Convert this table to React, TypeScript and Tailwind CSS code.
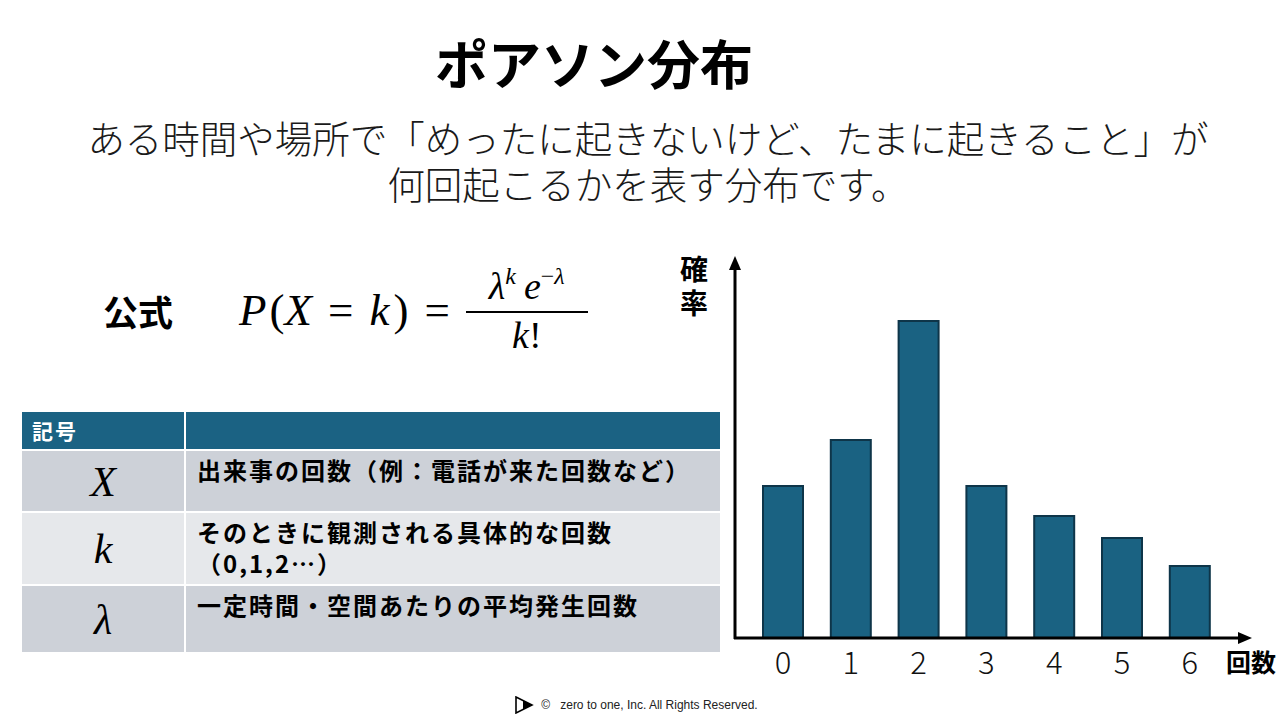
import React from 'react'

const jp = { fontFamily: '"Noto Sans CJK JP", "Noto Sans", sans-serif' }
const math = { fontFamily: '"Liberation Serif", "DejaVu Serif", serif' }

const bars = [
  { label: '0', top: 246 },
  { label: '1', top: 200 },
  { label: '2', top: 81 },
  { label: '3', top: 246 },
  { label: '4', top: 276 },
  { label: '5', top: 298 },
  { label: '6', top: 326 },
]

const rows = [
  { sym: 'X', text: ['出来事の回数（例：電話が来た回数など）'], h: 'h-[60px]', bg: 'bg-[#cdd1d8]' },
  { sym: 'k', text: ['そのときに観測される具体的な回数', '（0,1,2…）'], h: 'h-[71px]', bg: 'bg-[#e6e8eb]' },
  { sym: 'λ', text: ['一定時間・空間あたりの平均発生回数'], h: 'h-[66px]', bg: 'bg-[#cdd1d8]' },
]

function Formula() {
  return (
    <div className="flex items-center text-[45px] text-black" style={math}>
      <span className="italic">P</span>
      <span className="ml-[3px]">(</span>
      <span className="italic">X</span>
      <span className="mx-[16px]">=</span>
      <span className="italic">k</span>
      <span className="ml-[4px]">)</span>
      <span className="mx-[16px]">=</span>
      <div className="flex flex-col items-center">
        <div className="flex items-start text-[38px] leading-[42px] italic">
          <span>λ</span>
          <span className="text-[24px] leading-[22px] mr-[8px]">k</span>
          <span>e</span>
          <span className="text-[24px] leading-[22px] not-italic">−</span>
          <span className="text-[24px] leading-[22px]">λ</span>
        </div>
        <div className="h-[2px] w-[122px] bg-black mt-[4px]" />
        <div className="text-[38px] leading-[44px] italic">
          k<span className="not-italic">!</span>
        </div>
      </div>
    </div>
  )
}

function Chart() {
  return (
    <svg width="610" height="450" viewBox="0 0 610 450" className="block">
      <text x="24" y="40" fontSize="28" fontWeight="700" textAnchor="middle" style={jp}>確</text>
      <text x="24" y="74" fontSize="28" fontWeight="700" textAnchor="middle" style={jp}>率</text>
      {bars.map((b, i) => {
        const x = 93 + i * 67.8
        return (
          <g key={b.label}>
            <rect x={x} y={b.top} width="40" height={398 - b.top} fill="#1a6282" stroke="#0e3549" strokeWidth="2" />
            <text x={x + 20} y="434" fontSize="31" fontWeight="300" textAnchor="middle" fill="#111" style={jp}>
              {b.label}
            </text>
          </g>
        )
      })}
      <line x1="65" y1="28" x2="65" y2="399" stroke="#000" strokeWidth="3" />
      <polygon points="65,16 59,30 71,30" fill="#000" />
      <line x1="64" y1="398" x2="570" y2="398" stroke="#000" strokeWidth="3" />
      <polygon points="582,398 568,392 568,404" fill="#000" />
      <text x="581" y="432" fontSize="25" fontWeight="700" textAnchor="middle" style={jp}>回数</text>
    </svg>
  )
}

export default function App() {
  return (
    <div className="w-[1280px] h-[720px] bg-white flex flex-col overflow-hidden text-black" style={jp}>
      <h1 className="pt-[31px] pr-[92px] text-center text-[53px] leading-[62px] font-bold">ポアソン分布</h1>
      <div className="mt-[21px] pl-[16px] text-center text-[37.5px] leading-[46px] font-light text-[#1a1a1a]">
        <p>ある時間や場所で「めったに起きないけど、たまに起きること」が</p>
        <p>何回起こるかを表す分布です。</p>
      </div>

      <div className="flex">
        {/* left: formula and symbols */}
        <div className="ml-[22px] w-[698px] flex flex-col shrink-0">
          <div className="mt-[50px] h-[110px] flex items-center">
            <span className="ml-[81px] text-[35px] font-bold">公式</span>
            <div className="ml-[66px]">
              <Formula />
            </div>
          </div>

          <div className="mt-[46px] flex flex-col gap-[2px]">
            <div className="flex h-[37px] gap-[2px]">
              <div className="w-[162px] bg-[#1b6283] text-white font-bold text-[21px] tracking-[2px] flex items-center pl-[10px]">記号</div>
              <div className="flex-1 bg-[#1b6283]" />
            </div>
            {rows.map((r) => (
              <div key={r.sym} className={`flex gap-[2px] ${r.h}`}>
                <div className={`w-[162px] ${r.bg} flex items-center justify-center text-[42px] italic pt-[2px]`} style={math}>
                  {r.sym}
                </div>
                <div className={`flex-1 ${r.bg} pl-[11px] pt-[3px] text-[24px] leading-[31px] tracking-[2px] font-bold`}>
                  {r.text.map((t) => (
                    <div key={t}>{t}</div>
                  ))}
                </div>
              </div>
            ))}
          </div>
        </div>

        {/* right: bar chart */}
        <div className="ml-[-50px] mt-[34px]">
          <Chart />
        </div>
      </div>

      <footer className="mt-auto mb-[6px] pr-[8px] flex items-center justify-center gap-[7px] text-[12px] text-[#222]" style={{ fontFamily: '"Liberation Sans", Arial, sans-serif' }}>
        <svg width="20" height="18" viewBox="0 0 20 18">
          <polygon points="2,1 18,9 2,17" fill="none" stroke="#000" strokeWidth="1.6" />
          <polygon points="9,4.5 18,9 9,13.5" fill="#000" />
        </svg>
        <span>©&nbsp;&nbsp;&nbsp;zero to one, Inc. All Rights Reserved.</span>
      </footer>
    </div>
  )
}
